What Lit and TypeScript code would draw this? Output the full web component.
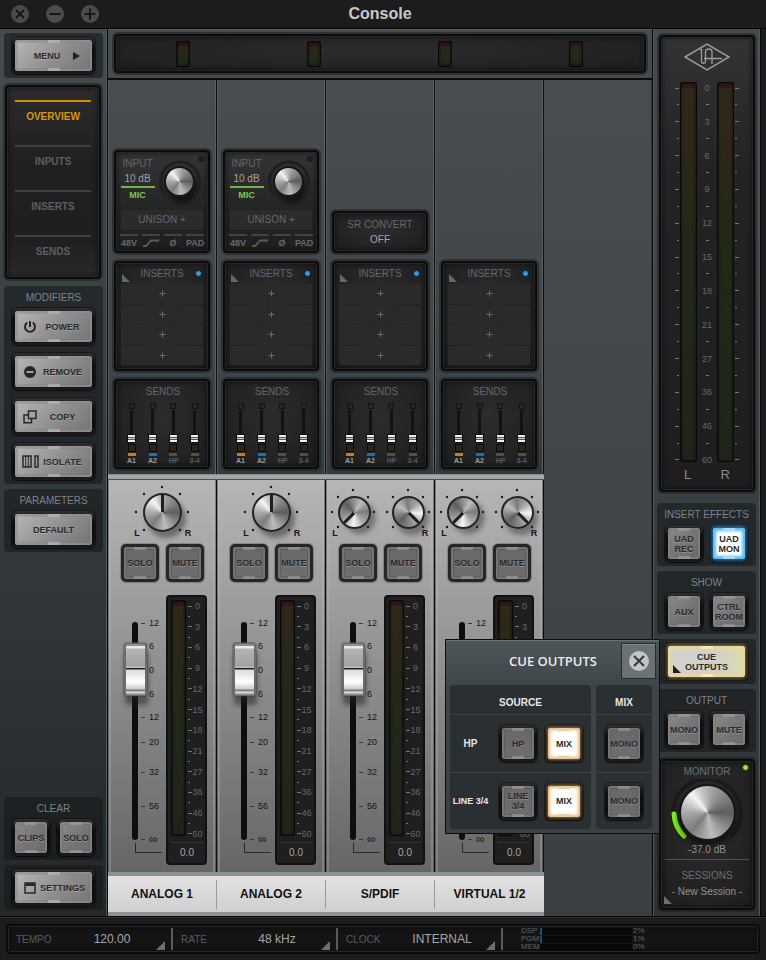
import { LitElement, html, svg, css, nothing } from "lit";
import { customElement, property } from "lit/decorators.js";
import { classMap } from "lit/directives/class-map.js";

const METER_MARKS = ["0", "3", "6", "9", "12", "15", "18", "21", "27", "36", "46", "60"];
const FADER_MARKS = ["12", "6", "0", "6", "12", "20", "32", "56", "∞"];
const SENDS = [
  { name: "A1", tone: "amber" },
  { name: "A2", tone: "blue" },
  { name: "HP", tone: "off" },
  { name: "3-4", tone: "off" },
];

interface Channel {
  name: string;
  slot: "preamp" | "convert" | "none";
  stereo: boolean;
}

const CHANNELS: Channel[] = [
  { name: "ANALOG 1", slot: "preamp", stereo: false },
  { name: "ANALOG 2", slot: "preamp", stereo: false },
  { name: "S/PDIF", slot: "convert", stereo: true },
  { name: "VIRTUAL 1/2", slot: "none", stereo: true },
];

/* Rows of a meter scale: every mark is followed by a minor tick, except the last. */
const scaleRows = (labels: boolean) =>
  METER_MARKS.map(
    (m, i) => html`<span class="mark"><i></i>${labels ? html`<b>${m}</b>` : nothing}</span>
      ${i < METER_MARKS.length - 1 ? html`<span class="mark minor"><i></i>${labels ? html`<b></b>` : nothing}</span>` : nothing}`
  );

const key = (label: unknown, opts: { wide?: boolean; lit?: string; icon?: unknown; tail?: unknown; dim?: boolean } = {}) => html`
  <button class=${classMap({ key: true, wide: !!opts.wide, dim: !!opts.dim, [opts.lit ?? "plain"]: true })}>
    <span class="face">${opts.icon ? html`<span class="ico">${opts.icon}</span>` : nothing}<span class="txt">${label}</span>${opts.tail ?? nothing}</span>
  </button>`;

const shared = css`
  * { box-sizing: border-box; }
  button { font: inherit; color: inherit; border: 0; padding: 0; margin: 0; background: none; }
  h1, h2, h3 { margin: 0; font-weight: 400; font-size: 10px; line-height: 12px; }
  svg { display: block; }

  .key {
    display: block; width: 38px; height: 37px; padding: 3px; border-radius: 5px;
    background: linear-gradient(#2e2e2e, #0f0f0f 30%, #0f0f0f 80%, #1c1c1c);
    box-shadow: 0 0 0 1px rgba(0, 0, 0, 0.35), 0 1px 2px rgba(0, 0, 0, 0.5);
    font-weight: 700; font-size: 9px; line-height: 10px; color: #2a2a2a;
  }
  .key.wide { width: 83px; }
  .face {
    position: relative; display: flex; align-items: center; justify-content: center;
    width: 100%; height: 100%; border-radius: 3px; text-align: center;
    background: linear-gradient(135deg, #b8b8b8, #8e8e8e 55%, #747474);
    box-shadow: inset 0 0 0 2px rgba(150, 150, 150, 0.6), inset 0 0 0 3px rgba(110, 110, 110, 0.25);
    text-shadow: 0 1px 0 rgba(255, 255, 255, 0.22);
  }
  .key:not(.wide) .face { background: linear-gradient(135deg, #8c8c8c, #767676 50%, #6a6a6a); box-shadow: inset 0 0 0 2px rgba(135, 135, 135, 0.7), inset 0 0 0 3px rgba(90, 90, 90, 0.25); }
  .key.dim .face { background: linear-gradient(#686868, #6e6e6e); box-shadow: inset 0 0 0 2px #747474, inset 0 0 0 3px rgba(70, 70, 70, 0.35); }
  .face::before, .face::after {
    content: ""; position: absolute; left: 50%; width: 12px; height: 3px; margin-left: -6px;
    background: rgba(200, 200, 200, 0.5);
  }
  .key:not(.wide) .face::before, .key:not(.wide) .face::after { background: rgba(170, 170, 170, 0.5); }
  .face::before { top: 0; }
  .face::after { bottom: 0; }
  .txt { flex: 1; white-space: nowrap; }
  .ico { width: 25px; padding-left: 5px; display: flex; justify-content: center; }
  .ico + .txt { padding-right: 7px; }
  .key.orange:not(.wide) .face, .key.sky:not(.wide) .face { background: #fff; }
  .key.orange:not(.wide) .face { box-shadow: inset 0 0 3px 2px #e8b878, 0 0 3px 1px #8a6a3e; }
  .key.orange:not(.wide) .face::before, .key.orange:not(.wide) .face::after { background: #e6cfae; }
  .key.sky:not(.wide) .face { box-shadow: inset 0 0 3px 3px #5bbcf5, 0 0 4px 1px #2484c4; }
  .key.sky:not(.wide) .face::before, .key.sky:not(.wide) .face::after { background: #a9dcf8; }
  .key.cream .face {
    background: linear-gradient(90deg, #d2d2d0, #cfcfca 60%, #dedcae);
    box-shadow: inset 0 0 4px 3px #ead9a0, 0 0 4px 1px #8d7340;
  }
  .key.cream .face::before, .key.cream .face::after { background: #f6e8bd; }
  .corner { position: absolute; left: 5px; bottom: 4px; }

  .well {
    position: relative; border-radius: 4px; border: 2px solid #0b0b0b;
    background: radial-gradient(ellipse at 50% 40%, #2c2c2c, #212121 75%, #1c1c1c);
    box-shadow: inset 0 0 0 1px #262626, inset 0 0 4px 2px rgba(0, 0, 0, 0.4), 0 0 0 2px rgba(22, 26, 28, 0.5);
  }
  .bar {
    display: block; border: 1px solid #080808; border-radius: 2px;
    background: linear-gradient(#351716 0 5px, transparent 5px), linear-gradient(#2e2819 0, #2b2718 28%, #242917 31%, #1f2819 60%, #1f241a);
    box-shadow: inset 0 0 3px rgba(0, 0, 0, 0.8);
  }
  .scale { display: flex; flex-direction: column; justify-content: space-between; }
  .mark { display: flex; align-items: center; height: 8px; font-size: 9px; line-height: 8px; color: #646a6c; }
  .mark i { width: 4px; height: 1px; background: #70787a; }
  .mark b { flex: 1; text-align: center; font-weight: 400; }
  .mark.minor i { width: 2px; }
  .knob {
    display: block; border-radius: 50%; border: 2px solid #161616;
    background: conic-gradient(from 20deg, #9a9a9a, #5e5e5e 70deg, #8c8c8c 110deg, #bcbcbc 150deg, #7c7c7c 200deg, #a8a8a8 250deg, #f4f4f4 300deg, #c4c4c4 325deg, #9a9a9a);
  }
`;

@customElement("channel-strip")
class ChannelStrip extends LitElement {
  @property({ attribute: false }) channel!: Channel;

  static styles = [
    shared,
    css`
      :host { display: flex; flex-direction: column; width: 109px; }
      .upper {
        flex: 1; display: flex; flex-direction: column; justify-content: flex-end; gap: 8px;
        padding: 0 6px 5px; border-right: 1px solid #0c0e0f;
        box-shadow: inset -1px 0 #595f62, inset 1px 0 #53595c;
        background: linear-gradient(#484d50, #3f4548 70%, #33393c);
        color: #62686b; font-size: 10px;
      }
      .rail { height: 6px; background: linear-gradient(#7b8183, #a9adaf 30%, #a0a4a6 75%, #26292a); }
      .preamp { height: 103px; padding: 4px 4px 0; background: linear-gradient(#343434, #242424 60%, #1f1f1f); }
      .gain { display: grid; grid-template-columns: 35px 1fr; height: 54px; }
      .readings { display: flex; flex-direction: column; align-items: center; line-height: 15px; white-space: nowrap; }
      .readings .db { color: #a2a2a2; }
      .readings .mic { width: 34px; border-top: 2px solid #6fb842; color: #7cc84b; font-weight: 700; font-size: 9px; text-align: center; }
      .gain-knob { display: grid; place-items: center; margin-top: -4px; position: relative; }
      .ring { position: absolute; }
      .gain-knob .knob { width: 31px; height: 31px; box-shadow: 3px 6px 5px rgba(0, 0, 0, 0.5); }
      .dot { position: absolute; right: 0; top: 4px; width: 6px; height: 6px; border-radius: 50%; background: #1c1c1c; }
      .unison { height: 20px; margin: 0 1px; line-height: 20px; text-align: center; background: #2b2b2b; }
      .switches { display: flex; justify-content: space-between; margin-top: 4px; }
      .switches button { display: grid; justify-items: center; width: 18px; border-top: 2px solid #3f4446; font-weight: 700; font-size: 9px; line-height: 14px; }
      .switches svg { margin-top: 3px; }
      .convert { height: 42px; display: grid; align-content: center; text-align: center; line-height: 15px; }
      .convert .off { color: #a6a6a6; }
      .inserts { height: 110px; padding: 5px 4px 0; }
      .head { position: relative; text-align: center; height: 16px; line-height: 12px; }
      .head svg { position: absolute; left: 2px; bottom: 2px; }
      .led { position: absolute; right: 2px; top: 2px; width: 7px; height: 7px; border-radius: 50%; background: #2f9fdf; border: 1px solid #0a1c2a; }
      .slots { display: grid; grid-auto-rows: 1fr; gap: 1px; height: 81px; margin: 0 1px; }
      .slots button { background: #2a2a2a; display: grid; place-items: center; }
      .sends { height: 90px; padding: 5px 3px 0 5px; text-align: center; }
      .send-row { display: grid; grid-template-columns: repeat(4, 1fr); margin-top: 5px; justify-items: center; }
      .send { display: grid; justify-items: center; font-size: 7px; line-height: 10px; font-weight: 700; color: #565c5e; }
      .send .clip { width: 6px; height: 6px; border: 1px solid #121212; background: #1c3010; }
      .send .pre { width: 8px; height: 8px; margin-top: 1px; border: 1px solid #0c0c0c; background: #2d2411; }
      .send .line { width: 8px; height: 3px; margin: 1px 0 0; background: #4a5052; }
      .send.amber, .send.blue { color: #989ea0; }
      .send.amber .line { background: #cc7c14; }
      .send.blue .line { background: #0a74c8; }
      input[type="range"] {
        appearance: none; -webkit-appearance: none; writing-mode: vertical-lr; direction: rtl;
        margin: 0; padding: 0; background: none;
      }
      .send input { width: 9px; height: 33px; margin-top: 1px; background: linear-gradient(#121212, #121212) center / 3px 100% no-repeat; }
      .send input::-webkit-slider-thumb {
        -webkit-appearance: none; width: 9px; height: 9px; border: 1px solid #0a0a0a;
        background: linear-gradient(#eee 0 2px, #555 2px 3px, #c9c9c9 3px 4px, #555 4px 5px, #f2f2f2 5px);
      }

      .lower {
        height: 392px; display: flex; flex-direction: column; padding: 0 12px 0 13px;
        border-right: 1px solid #0c0c0c;
        box-shadow: inset -1px 0 rgba(40, 40, 40, 0.4), inset -3px 0 rgba(190, 190, 190, 0.3), inset 1px 0 rgba(40, 40, 40, 0.4), inset 3px 0 rgba(190, 190, 190, 0.3);
        background: linear-gradient(#b6b6b6, #9e9e9e 30%, #868686 60%, #666);
      }
      .pan { display: grid; height: 64px; margin: 0 -13px 0 -13px; }
      .pan > * { grid-area: 1 / 1; }
      .pan text { font: 700 9px "Liberation Sans", Arial, sans-serif; fill: #161616; text-anchor: middle; }
      .pots { display: grid; grid-auto-flow: column; grid-auto-columns: 1fr; place-items: center; }
      .pots.two { padding: 0 0 0 1px; }
      .pot { width: 39px; height: 39px; border-color: #242424; box-shadow: 4px 6px 5px rgba(30, 30, 30, 0.45); display: flex; justify-content: center; }
      .pot::before { content: ""; width: 3px; height: 17px; background: #1f1f1f; }
      .two .pot { width: 33px; height: 33px; }
      .two .pot::before { height: 14px; }
      .pot.left { transform: rotate(225deg); box-shadow: -7px 0 5px rgba(30, 30, 30, 0.4); }
      .pot.right { transform: rotate(135deg); box-shadow: 2px -7px 5px rgba(30, 30, 30, 0.4); }
      .keys { display: flex; justify-content: space-between; }
      .keys .key { height: 38px; background: #262626; box-shadow: 0 0 1px 1px rgba(60, 60, 60, 0.35); }
      .level { display: grid; grid-template-columns: 42px 41px; gap: 3px; margin: 13px -4px 0 0; height: 270px; }
      .fader { position: relative; margin-top: 22px; height: 248px; }
      .track { position: absolute; left: 11px; top: 5px; width: 6px; height: 218px; border-radius: 3px; background: #0e0e0e; }
      .fader input { position: absolute; left: 3px; top: 0; width: 23px; height: 228px; }
      .fader input::-webkit-slider-thumb {
        -webkit-appearance: none; width: 23px; height: 53px; border-radius: 3px; border: 1px solid #6c6c6c; border-width: 1px 2px;
        background:
          linear-gradient(#8d8d8d 0 2px, #e9e9e9 2px 4px, #b3b3b3 5px, #a2a2a2 22px, #c8c8c8 24px, #1d1d1d 24px 25px, #dcdcdc 26px, #fff 38px, #c9c9c9 45px, #7c7c7c 46px 47px, #ececec 48px, #777);
        box-shadow: 1px 9px 5px rgba(30, 30, 30, 0.5), 0 0 1px 1px rgba(90, 90, 90, 0.5);
      }
      .db-scale {
        display: grid; grid-template-rows: 23fr 24fr 24fr 23fr 25fr 30fr 34fr 33fr 12fr; height: 228px; margin-left: 20px;
        font-size: 9px; line-height: 12px; color: #161616;
      }
      .db-scale span { display: flex; align-items: center; height: 12px; gap: 4px; }
      .db-scale span:last-child { font-size: 12px; }
      .db-scale i { width: 4px; height: 1px; background: #3a3a3a; }
      .bracket { width: 27px; height: 10px; margin: -2px 0 0 14px; border-left: 1px solid #2a2a2a; border-bottom: 1px solid #2a2a2a; }
      .meter { display: grid; grid-template: 1fr 20px / 15px 1fr; padding: 3px 2px 3px 3px; column-gap: 2px; background: #1f1f1f; border-color: #111; box-shadow: none; }
      .meter .bar { margin-bottom: 4px; }
      .meter .scale { padding: 2px 0; }
      .out { grid-column: 1 / -1; border-top: 1px solid #353535; margin-top: 2px; font-size: 10px; line-height: 20px; color: #a5a5a5; text-align: center; }
      .name {
        height: 44px; border: solid #8d9395; border-width: 4px 0; display: grid; background: linear-gradient(#e2e2e2, #d0d0d0);
      }
      .name h2 { margin: 4px 0; border-right: 1px solid #9b9b9b; font-weight: 700; font-size: 12px; line-height: 29px; color: #111; text-align: center; }
      :host(:last-of-type) .name h2 { border-right: 0; }
    `,
  ];

  private preamp() {
    return html`<section class="well preamp">
      <div class="gain">
        <div class="readings"><span>INPUT</span><span class="db">10 dB</span><span class="mic">MIC</span></div>
        <div class="gain-knob">
          <svg class="ring" width="44" height="44" viewBox="0 0 44 44"><path d="M8 36A19.500 19.500 0 1 1 36 36" fill="none" stroke="#1f1f1f" stroke-width="3" /></svg>
          <span class="knob" role="slider" aria-label="Gain" aria-valuenow="10"></span>
          <span class="dot"></span>
        </div>
      </div>
      <div class="unison">UNISON +</div>
      <div class="switches">
        <button>48V</button>
        <button aria-label="Low cut"><svg width="16" height="8" viewBox="0 0 16 8"><path d="M0 7H3L8 1.500H16" fill="none" stroke="#565c5f" stroke-width="1.800" /></svg></button>
        <button>Ø</button>
        <button>PAD</button>
      </div>
    </section>`;
  }

  private pan() {
    const dots = (pts: number[][]) => pts.map(([x, y]) => svg`<circle cx=${x} cy=${y} r="1.200" fill="#1b1b1b" />`);
    if (!this.channel.stereo) {
      return html`<div class="pan">
        <svg width="108" height="64" viewBox="0 0 108 64">
          ${dots([[54, 7], [36, 14], [72, 14], [28, 32], [80, 32], [36, 50], [72, 50]])}
          <text x="29" y="56">L</text><text x="80" y="56">R</text>
        </svg>
        <div class="pots"><span class="knob pot" role="slider" aria-label="Pan" aria-valuenow="0"></span></div>
      </div>`;
    }
    const ring = (c: number) => dots([[c, 10], [c - 15, 17], [c + 15, 17], [c - 21, 32], [c + 21, 32], [c - 15, 47], [c + 15, 47]]);
    return html`<div class="pan">
      <svg width="108" height="64" viewBox="0 0 108 64">
        ${ring(27)} ${ring(82)}
        <text x="9" y="56">L</text><text x="99" y="56">R</text>
      </svg>
      <div class="pots two">
        <span class="knob pot left" role="slider" aria-label="Pan left" aria-valuenow="-100"></span>
        <span class="knob pot right" role="slider" aria-label="Pan right" aria-valuenow="100"></span>
      </div>
    </div>`;
  }

  render() {
    const c = this.channel;
    return html`
      <div class="upper">
        ${c.slot === "preamp" ? this.preamp() : nothing}
        ${c.slot === "convert" ? html`<section class="well convert"><span>SR CONVERT</span><span class="off">OFF</span></section>` : nothing}
        <section class="well inserts">
          <div class="head">
            <svg width="8" height="8" viewBox="0 0 8 8"><path d="M0 0L8 8H0Z" fill="#62696c" /></svg>
            INSERTS<span class="led"></span>
          </div>
          <div class="slots">
            ${[1, 2, 3, 4].map((n) => html`<button aria-label="Insert ${n}"><svg width="7" height="7" viewBox="0 0 7 7"><path d="M3.500 0.500V6.500M0.500 3.500H6.500" stroke="#666b6e" /></svg></button>`)}
          </div>
        </section>
        <section class="well sends">
          <h3>SENDS</h3>
          <div class="send-row">
            ${SENDS.map((s) => html`<label class="send ${s.tone}"><span class="clip"></span><input type="range" min="0" max="1" step="0.01" .value=${"0"} /><span class="pre"></span><span class="line"></span>${s.name}</label>`)}
          </div>
        </section>
      </div>
      <div class="rail"></div>
      <div class="lower">
        ${this.pan()}
        <div class="keys">${key("SOLO", { dim: true })}${key("MUTE", { dim: true })}</div>
        <div class="level">
          <div class="fader">
            <div class="track"></div>
            <div class="db-scale">${FADER_MARKS.map((m) => html`<span><i></i>${m}</span>`)}</div>
            <div class="bracket"></div>
            <input type="range" aria-label="${c.name} level" min="0" max="1" step="0.01" value="0.85" />
          </div>
          <div class="well meter">
            <span class="bar"></span>
            <div class="scale">${scaleRows(true)}</div>
            <div class="out">0.0</div>
          </div>
        </div>
      </div>
      <div class="name"><h2>${c.name}</h2></div>
    `;
  }
}

const powerIcon = svg`<svg width="14" height="14" viewBox="0 0 14 14" fill="none" stroke="#262626" stroke-width="2"><path d="M4.200 2.600A5 5 0 1 0 9.800 2.600M7 1V7" /></svg>`;
const removeIcon = svg`<svg width="12" height="12" viewBox="0 0 12 12"><circle cx="6" cy="6" r="6" fill="#262626" /><path d="M2.500 6H9.500" stroke="#a0a0a0" stroke-width="2" /></svg>`;
const copyIcon = svg`<svg width="14" height="14" viewBox="0 0 14 14" fill="none" stroke="#2a2a2a" stroke-width="1.500"><path d="M5.500 1H13V8.500H5.500Z M5.500 5H1V12.800H8.500V8.500" /></svg>`;
const isolateIcon = svg`<svg width="17" height="13" viewBox="0 0 17 13" fill="none" stroke="#2a2a2a"><path d="M1 1H9V12H1Z M13 1H16V12H13Z" stroke-width="1.500" /><path d="M3.700 1V12M6.300 1V12" /></svg>`;
const windowIcon = svg`<svg width="12" height="12" viewBox="0 0 12 12"><path d="M1 1H11V11H1Z" fill="none" stroke="#2a2a2a" stroke-width="1.500" /><path d="M1 1H11V4H1Z" fill="#2a2a2a" /></svg>`;
const playTail = svg`<svg class="play" width="7" height="8" viewBox="0 0 7 8"><path d="M0 0L7 4L0 8Z" fill="#1f1f1f" /></svg>`;
const cornerTail = svg`<svg class="corner" width="8" height="8" viewBox="0 0 8 8"><path d="M0 0L8 8H0Z" fill="#1f1f1f" /></svg>`;

@customElement("app-root")
class AppRoot extends LitElement {
  static styles = [
    shared,
    css`
      :host {
        display: flex; flex-direction: column; min-height: 100vh; background: #1a1b1c;
        font-family: "Liberation Sans", Arial, Helvetica, sans-serif; font-size: 10px;
        color: #72787b; cursor: default; overflow: hidden;
      }
      .title { display: grid; grid-template-columns: 108px 1fr 114px; align-items: center; height: 29px; background: #1c1c1c; border-bottom: 1px solid #050505; }
      .title h1 { font-size: 16px; line-height: 20px; font-weight: 700; color: #c9c9c9; text-align: center; }
      .winctl { display: flex; gap: 17px; padding-left: 11px; }

      .main { position: relative; flex: 1; display: flex; padding-right: 5px; }
      .side { display: flex; flex-direction: column; }
      .left { width: 108px; padding: 4px 4px 6px 4px; border-right: 1px solid #0b0c0d; background: linear-gradient(#444c50, #2e3437 70%, #23282a); box-shadow: inset -1px 0 #50575a; }
      .block { border-radius: 4px; background: rgba(22, 25, 27, 0.6); padding: 4px 8px; }
      .block h2 { height: 18px; line-height: 15px; text-align: center; color: #7d8386; white-space: nowrap; margin: 0 -4px; }
      .left section + section, .left section + div.block { margin-top: 5px; }
      .pair { display: flex; justify-content: space-between; }
      .stack { display: grid; gap: 8px; }
      .play { margin-right: 12px; }
      .play-key .txt { padding-left: 6px; }
      .tabs { margin: 7px 2px 7px 1px; height: 194px; padding: 13px 8px 0; background: linear-gradient(#2c2c2c, #202020 40%, #1f1f1f 80%, #292929); }
      .tabs button { display: flex; justify-content: center; align-items: flex-start; width: 100%; height: 45px; padding-top: 8px; border-top: 2px solid #3c4143; font-weight: 700; line-height: 14px; color: #596063; }
      .tabs button.on { border-color: #cf8d0d; color: #d7960f; }
      .gap { flex: 1; }

      .center { flex: 1; display: flex; flex-direction: column; min-width: 0; }
      .bridge { height: 51px; padding: 5px 6px; background: #454c4f; border-bottom: 2px solid #0b0c0d; box-shadow: inset 0 1px #5a6164; }
      .bridge .well { height: 39px; display: grid; grid-template-columns: repeat(4, 1fr); place-items: center; padding: 0 3px 0 1px; }
      .bridge .bar { width: 14px; height: 26px; background: linear-gradient(#2e1715 0 4px, #2c2518 5px, #222a19 16px, #1d2617); }
      .channels { flex: 1; display: flex; }
      .empty { flex: 1; background: linear-gradient(#484d50, #3a3f43); box-shadow: inset -1px 0 #30363a; }

      .right { width: 109px; padding: 6px 4px 6px 4px; border-left: 1px solid #08090a; border-right: 1px solid #08090a; background: linear-gradient(#444c50, #3a4145 50%, #2c3134); box-shadow: inset 1px 0 #50575a, inset -1px 0 #50575a; }
      .master { flex: 1; display: flex; flex-direction: column; margin: 0 1px 11px 2px; padding: 6px 14px 7px; background: linear-gradient(#333, #232323 30%, #1e1e1e); }
      .master .logo { align-self: center; flex: none; }
      .columns { flex: 1; display: grid; grid-template-columns: 4px 17px 1fr 17px 4px; column-gap: 1px; margin-top: 11px; }
      .columns .bar { margin-bottom: 2px; }
      .columns .scale { padding-top: 2px; }
      .columns .mid .mark i { display: none; }
      .columns .mid .mark.minor i { display: block; margin: auto; height: 1px; width: 3px; }
      .columns .mid .mark.minor b { display: none; }
      .columns .lt .mark { justify-content: flex-end; }
      .lr { display: flex; justify-content: space-between; padding: 3px 9px 0 9px; font-size: 13px; line-height: 16px; color: #8b8b8b; }
      .right .block { margin-bottom: 5px; }
      .dial { height: 151px; margin: 2px 1px 0 2px; padding: 4px 4px 0; text-align: center; line-height: 13px; }
      .dial h2 { color: #6a7073; line-height: 13px; }
      .dial .on { position: absolute; right: 4px; top: 3px; width: 7px; height: 7px; border-radius: 50%; background: #9bef1c; border: 1px solid #1a2a08; }
      .volume { display: grid; place-items: center; height: 63px; margin-top: 1px; }
      .volume > * { grid-area: 1 / 1; }
      .volume .knob { width: 57px; height: 57px; box-shadow: 0 5px 6px rgba(0, 0, 0, 0.6); }
      .val { color: #8e9396; margin-top: 1px; }
      .sessions { margin-top: 3px; padding-top: 9px; border-top: 1px solid #4b5153; }
      .sessions button { width: 100%; line-height: 14px; margin-top: 3px; color: #8e9396; white-space: nowrap; }
      .dial .corner { left: 3px; bottom: 4px; }

      .cue {
        position: absolute; right: 106px; bottom: 82px; width: 215px; height: 195px; padding: 4px;
        border: 1px solid #0c0e0f; background: linear-gradient(#4f5659, #3e4548 25%, #3a4043);
        box-shadow: inset 0 1px #6b7274; color: #e6e6e6; font-weight: 700;
      }
      .cue-head { display: grid; grid-template-columns: 35px 1fr 35px; align-items: center; height: 36px; margin: -1px -1px 0 0; }
      .cue-head h2 { font: 600 13px "Open Sans", "Noto Sans", sans-serif; text-align: center; color: #ececec; }
      .close { height: 36px; display: grid; place-items: center; border: 1px solid #262b2d; background: #6a7275; box-shadow: inset 0 1px #858c8e; }
      .grids { display: grid; grid-template-columns: 1fr 56px; gap: 5px; margin: 6px 3px 0 0; }
      .grid { border-radius: 4px; background: #2a2f31; }
      .grid h3 { height: 30px; padding-top: 6px; line-height: 24px; font-weight: 700; text-align: center; border-bottom: 1px solid #3d4346; }
      .line { display: flex; align-items: center; height: 57px; gap: 8px; }
      .line + .line { border-top: 1px solid #3d4346; }
      .line .tag { width: 41px; text-align: center; white-space: nowrap; }
      .line .tag.small { font-size: 9px; }
      .only { justify-content: center; }

      .foot { height: 44px; padding: 7px 6px 6px; background: #1c1c1c; border-top: 1px solid #060606; box-shadow: inset 0 1px #303030; }
      .foot .well { display: flex; align-items: center; height: 30px; background: #141414; }
      .seg { position: relative; width: 165px; height: 22px; display: grid; grid-template-columns: 46px 100px; padding-left: 8px; align-items: center; border-right: 2px solid #555c5f; color: #555c5f; text-align: left; }
      .seg b { font-weight: 400; font-size: 12px; color: #a4a7a8; text-align: center; }
      .seg svg { position: absolute; right: 6px; bottom: 0; }
      .load { display: grid; grid-template-columns: 18px 92px 20px; margin-left: 18px; font-size: 8px; line-height: 8px; align-items: center; color: #5e6467; column-gap: 1px; }
      .load .rail { height: 7px; background: #090909; display: flex; }
      .load .rail.hot::before { content: ""; width: 2px; background: #145078; }
    `,
  ];

  render() {
    const win = (d: string) => html`<svg width="18" height="18" viewBox="0 0 18 18"><circle cx="9" cy="9" r="9" fill="#4b4b4b" /><path d=${d} stroke="#161616" stroke-width="2" /></svg>`;
    return html`
      <header class="title">
        <div class="winctl">
          <button aria-label="Close window">${win("M5 5L13 13M13 5L5 13")}</button>
          <button aria-label="Minimise">${win("M3.500 9H14.500")}</button>
          <button aria-label="Zoom window">${win("M3.500 9H14.500M9 3.500V14.500")}</button>
        </div>
        <h1>Console</h1>
      </header>

      <main class="main">
        <nav class="side left">
          <div class="block play-key">${key("MENU", { wide: true, tail: playTail })}</div>
          <div class="well tabs">
            <button class="on">OVERVIEW</button><button>INPUTS</button><button>INSERTS</button><button>SENDS</button>
          </div>
          <section class="block">
            <h2>MODIFIERS</h2>
            <div class="stack">
              ${key("POWER", { wide: true, icon: powerIcon })}
              ${key("REMOVE", { wide: true, icon: removeIcon })}
              ${key("COPY", { wide: true, icon: copyIcon })}
              ${key("ISOLATE", { wide: true, icon: isolateIcon })}
            </div>
          </section>
          <section class="block">
            <h2>PARAMETERS</h2>
            ${key("DEFAULT", { wide: true })}
          </section>
          <div class="gap"></div>
          <section class="block">
            <h2>CLEAR</h2>
            <div class="pair">${key("CLIPS")}${key("SOLO")}</div>
          </section>
          <div class="block">${key("SETTINGS", { wide: true, icon: windowIcon })}</div>
        </nav>

        <div class="center">
          <div class="bridge"><div class="well">${[1, 2, 3, 4].map(() => html`<span class="bar"></span>`)}</div></div>
          <div class="channels">
            ${CHANNELS.map((c) => html`<channel-strip .channel=${c}></channel-strip>`)}
            <div class="empty"></div>
          </div>
        </div>

        <aside class="side right">
          <section class="well master">
            <svg class="logo" width="46" height="28" viewBox="0 0 46 28" fill="none" stroke="#9b9b9b">
              <path d="M1 14L23 1L45 14L23 27Z" stroke-width="1.500" />
              <path d="M16 6.500H17.500V18C17.500 21 21.500 21 21.500 18V9C21.500 5 28 5 28 9V21M20 15.500H38" stroke-width="1.300" />
            </svg>
            <div class="columns">
              <div class="scale lt">${scaleRows(false)}</div>
              <span class="bar"></span>
              <div class="scale mid">${scaleRows(true)}</div>
              <span class="bar"></span>
              <div class="scale">${scaleRows(false)}</div>
            </div>
            <div class="lr"><span>L</span><span>R</span></div>
          </section>
          <section class="block">
            <h2>INSERT EFFECTS</h2>
            <div class="pair">${key(html`UAD<br />REC`)}${key(html`UAD<br />MON`, { lit: "sky" })}</div>
          </section>
          <section class="block">
            <h2>SHOW</h2>
            <div class="pair">${key("AUX")}${key(html`CTRL<br />ROOM`)}</div>
          </section>
          <div class="block">${key(html`CUE<br />OUTPUTS`, { wide: true, lit: "cream", tail: cornerTail })}</div>
          <section class="block">
            <h2>OUTPUT</h2>
            <div class="pair">${key("MONO")}${key("MUTE")}</div>
          </section>
          <section class="well dial">
            <h2>MONITOR</h2>
            <span class="on"></span>
            <div class="volume">
              <svg width="76" height="66" viewBox="0 0 76 66" fill="none">
                <path d="M14 58A34 34 0 1 1 62 58" stroke="#1b1b1b" stroke-width="4" />
                <path d="M5 35A34 34 0 0 0 15 57" stroke="#7df01a" stroke-width="5" stroke-linecap="round" />
              </svg>
              <span class="knob" role="slider" aria-label="Monitor level" aria-valuenow="-37"></span>
            </div>
            <div class="val">-37.0 dB</div>
            <div class="sessions"><h2>SESSIONS</h2><button>- New Session -</button></div>
            <svg class="corner" width="8" height="8" viewBox="0 0 8 8"><path d="M0 0L8 8H0Z" fill="#6a7174" /></svg>
          </section>
        </aside>

        <section class="cue" role="dialog" aria-label="Cue outputs">
          <div class="cue-head">
            <span></span>
            <h2>CUE OUTPUTS</h2>
            <button class="close" aria-label="Close"><svg width="20" height="20" viewBox="0 0 20 20"><circle cx="10" cy="10" r="10" fill="#c2c4c5" /><path d="M5 5L15 15M15 5L5 15" stroke="#34393b" stroke-width="2" /></svg></button>
          </div>
          <div class="grids">
            <div class="grid">
              <h3>SOURCE</h3>
              <div class="line"><span class="tag">HP</span>${key("HP", { dim: true })}${key("MIX", { lit: "orange" })}</div>
              <div class="line"><span class="tag small">LINE 3/4</span>${key(html`LINE<br />3/4`, { dim: true })}${key("MIX", { lit: "orange" })}</div>
            </div>
            <div class="grid">
              <h3>MIX</h3>
              <div class="line only">${key("MONO", { dim: true })}</div>
              <div class="line only">${key("MONO", { dim: true })}</div>
            </div>
          </div>
        </section>
      </main>

      <footer class="foot">
        <div class="well">
          ${[["TEMPO", "120.00"], ["RATE", "48 kHz"], ["CLOCK", "INTERNAL"]].map(
            ([k, v]) => html`<button class="seg"><span>${k}</span><b>${v}</b><svg width="9" height="9" viewBox="0 0 9 9"><path d="M9 0V9H0Z" fill="#6a7174" /></svg></button>`
          )}
          <div class="load">
            <span>DSP</span><span class="rail hot"></span><span>2%</span>
            <span>PGM</span><span class="rail hot"></span><span>1%</span>
            <span>MEM</span><span class="rail"></span><span>0%</span>
          </div>
        </div>
      </footer>
    `;
  }
}
